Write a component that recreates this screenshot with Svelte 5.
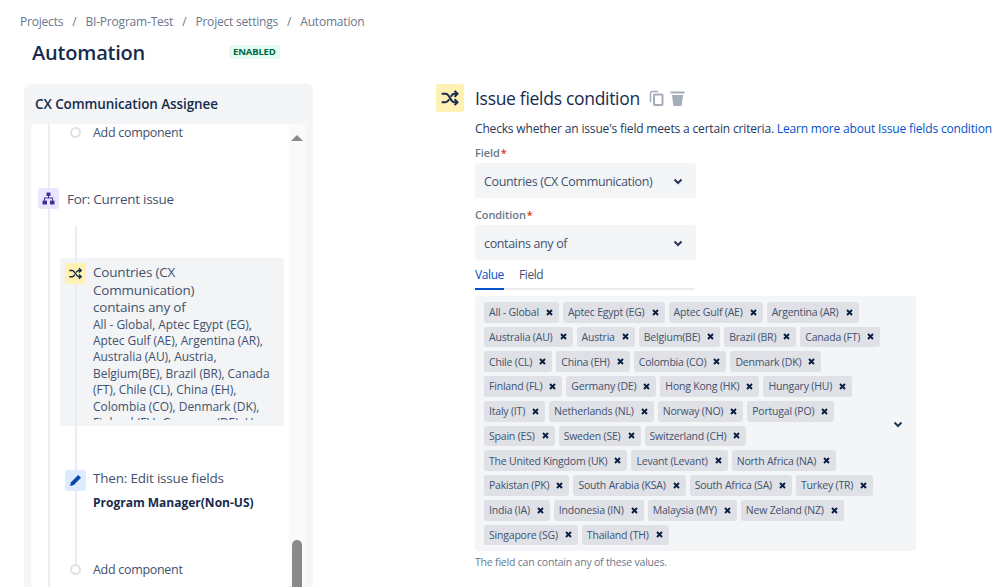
<script>
  const crumbs = ['Projects', 'BI-Program-Test', 'Project settings', 'Automation'];
  const countries = [
    'All - Global', 'Aptec Egypt (EG)', 'Aptec Gulf (AE)', 'Argentina (AR)',
    'Australia (AU)', 'Austria', 'Belgium(BE)', 'Brazil (BR)', 'Canada (FT)',
    'Chile (CL)', 'China (EH)', 'Colombia (CO)', 'Denmark (DK)',
    'Finland (FL)', 'Germany (DE)', 'Hong Kong (HK)', 'Hungary (HU)',
    'Italy (IT)', 'Netherlands (NL)', 'Norway (NO)', 'Portugal (PO)',
    'Spain (ES)', 'Sweden (SE)', 'Switzerland (CH)',
    'The United Kingdom (UK)', 'Levant (Levant)', 'North Africa (NA)',
    'Pakistan (PK)', 'South Arabia (KSA)', 'South Africa (SA)', 'Turkey (TR)',
    'India (IA)', 'Indonesia (IN)', 'Malaysia (MY)', 'New Zeland (NZ)',
    'Singapore (SG)', 'Thailand (TH)',
  ];
</script>

{#snippet shuffle(size)}
  <svg width={size} height={size} viewBox="0 0 24 24" fill="none" stroke="#172b4d" stroke-width="2.400">
    <path d="M2 7h5c4.500 0 5.500 10 10 10h3" />
    <path d="M2 17h5c1.800 0 3-1.600 4-3.400M13 10.400c1-1.800 2.200-3.400 4-3.400h3" />
    <path d="M17.500 3.500l3.500 3.500-3.500 3.500M17.500 13.500l3.500 3.500-3.500 3.500" />
  </svg>
{/snippet}

{#snippet chevron()}
  <svg width="10" height="7" viewBox="0 0 10 7" fill="none" stroke="#253858" stroke-width="2">
    <path d="M1.500 1.500L5 5l3.500-3.500" />
  </svg>
{/snippet}

<div class="page">
  <nav class="crumbs">
    {#each crumbs as crumb, i}
      {#if i > 0}<span class="sep">/</span>{/if}
      <span>{crumb}</span>
    {/each}
  </nav>

  <div class="columns">
    <aside class="left">
      <div class="title-row">
        <h1>Automation</h1>
        <span class="lozenge">ENABLED</span>
      </div>

      <section class="rule">
        <h2>CX Communication Assignee</h2>
        <div class="scroller">
          <div class="flow">
            <div class="line outer"></div>
            <div class="line inner"></div>

            <div class="add first"><span class="dot"></span>Add component</div>

            <div class="branch">
              <span class="icon purple">
                <svg width="13" height="13" viewBox="0 0 13 13" fill="#403294">
                  <rect x="4.500" y="0.500" width="4" height="3.500" rx="0.500" />
                  <rect x="0.500" y="8.500" width="4.500" height="4" rx="0.500" />
                  <rect x="8" y="8.500" width="4.500" height="4" rx="0.500" />
                  <path d="M6 4h1v1.500h4v3h-1v-2h-7v2h-1v-3h4z" />
                </svg>
              </span>
              <span>For: Current issue</span>
            </div>

            <div class="card">
              <span class="icon yellow">{@render shuffle(15)}</span>
              <div class="card-text">
                <div class="big">Countries (CX Communication)<br />contains any of</div>
                <div class="small">All - Global, Aptec Egypt (EG), Aptec Gulf (AE), Argentina (AR), Australia (AU), Austria, Belgium(BE), Brazil (BR), Canada (FT), Chile (CL), China (EH), Colombia (CO), Denmark (DK), Finland (FL), Germany (DE), Hong Kong (HK), Hungary (HU)</div>
              </div>
            </div>

            <div class="action">
              <span class="icon blue">
                <svg width="13" height="13" viewBox="0 0 13 13" fill="#0747a6">
                  <path d="M9.200 1l2.800 2.800-7.200 7.200-3.800 1 1-3.800z" />
                </svg>
              </span>
              <div>
                <div class="big">Then: Edit issue fields</div>
                <div class="strong">Program Manager(Non-US)</div>
              </div>
            </div>

            <div class="add last"><span class="dot"></span>Add component</div>
          </div>

          <div class="scrollbar">
            <span class="arrow"></span>
            <span class="thumb"></span>
          </div>
        </div>
      </section>
    </aside>

    <main class="right">
      <header class="head">
        <span class="head-icon">{@render shuffle(20)}</span>
        <h3>Issue fields condition</h3>
        <svg class="tool" width="15" height="16" viewBox="0 0 15 16" fill="none" stroke="#a5adba">
          <path d="M1.500 12V3a1.500 1.500 0 0 1 1.500-1.500h6" stroke-width="1.500" />
          <rect x="5" y="4.500" width="8.500" height="10.500" rx="1" stroke-width="2" />
        </svg>
        <svg class="tool trash" width="15" height="16" viewBox="0 0 15 16" fill="#a5adba">
          <path d="M0.500 1.500h14v2h-14zM2 5h11l-1.200 9.800a1.400 1.400 0 0 1-1.400 1.200h-5.800a1.400 1.400 0 0 1-1.400-1.200z" />
        </svg>
      </header>

      <p class="desc">Checks whether an issue's field meets a certain criteria. <a href="#learn">Learn more about Issue fields condition</a></p>

      <label class="label first-label" for="field-select">Field<span class="req">*</span></label>
      <div class="select" id="field-select"><span>Countries (CX Communication)</span>{@render chevron()}</div>

      <label class="label" for="cond-select">Condition<span class="req">*</span></label>
      <div class="select" id="cond-select"><span>contains any of</span>{@render chevron()}</div>

      <div class="tabs">
        <span class="tab active">Value</span>
        <span class="tab">Field</span>
      </div>

      <div class="multi">
        <div class="tags">
          {#each countries as country}
            <span class="tag">
              <span>{country}</span>
              <svg width="7" height="7" viewBox="0 0 7 7" stroke="#091e42" stroke-width="1.900">
                <path d="M1 1l5 5M6 1l-5 5" />
              </svg>
            </span>
          {/each}
        </div>
        <span class="multi-chevron">{@render chevron()}</span>
      </div>

      <p class="help">The field can contain any of these values.</p>
    </main>
  </div>
</div>

<style>
  :global(body) {
    margin: 0;
    background: #fff;
  }

  .page {
    height: 587px;
    overflow: hidden;
    font-family: "Open Sans", "Noto Sans", sans-serif;
    color: #172b4d;
  }

  .crumbs {
    display: flex;
    gap: 8px;
    height: 42px;
    padding-left: 20px;
    align-items: center;
    font-size: 12px;
    letter-spacing: -0.200px;
    color: #6b778c;
    box-sizing: border-box;
  }

  .sep {
    padding: 0 1px;
  }

  .columns {
    display: flex;
  }

  .left {
    width: 289px;
    margin-left: 24px;
  }

  .title-row {
    display: flex;
    align-items: flex-start;
    height: 42px;
    padding-left: 8px;
  }

  h1 {
    margin: -1px 0 0;
    width: 197px;
    font-size: 20px;
    font-weight: 600;
    line-height: 24px;
    letter-spacing: -0.200px;
  }

  .lozenge {
    margin-top: 3px;
    padding: 0 4px;
    height: 14px;
    line-height: 14px;
    font-size: 9.500px;
    font-weight: 700;
    letter-spacing: -0.150px;
    color: #006644;
    background: #e3fcef;
    border-radius: 3px;
  }

  .rule {
    height: 510px;
    background: #f4f5f7;
    border-radius: 6px;
    padding: 0 7px;
  }

  h2 {
    margin: 0;
    padding: 11px 4px 0;
    height: 40px;
    box-sizing: border-box;
    font-size: 13.500px;
    font-weight: 600;
    line-height: 19px;
    letter-spacing: -0.100px;
  }

  .scroller {
    display: flex;
    height: 470px;
    background: #fff;
    border-radius: 4px 0 0 0;
    overflow: hidden;
  }

  .flow {
    position: relative;
    flex: 1;
    min-width: 0;
  }

  .line {
    position: absolute;
    width: 2px;
    background: #ebecf5;
  }

  .line.outer {
    left: 17px;
    top: 0;
    bottom: 0;
  }

  .line.inner {
    left: 44px;
    top: 101px;
    height: 340px;
  }

  .add {
    position: relative;
    display: flex;
    align-items: center;
    font-size: 12.500px;
    letter-spacing: -0.300px;
    color: #42526e;
    padding-left: 39px;
    height: 18px;
  }

  .add.first {
    margin-top: -1px;
  }

  .dot {
    width: 7px;
    height: 7px;
    margin-right: 12px;
    border: 2px solid #dfe1e6;
    border-radius: 50%;
    background: #fff;
  }

  .icon {
    position: relative;
    display: flex;
    flex: none;
    align-items: center;
    justify-content: center;
    width: 21px;
    height: 21px;
    border-radius: 3px;
  }

  .purple { background: #eae6ff; }
  .yellow { background: #fff0b3; }
  .blue { background: #deebff; }

  .branch {
    position: relative;
    display: flex;
    align-items: center;
    gap: 8px;
    margin: 47px 0 0 7px;
    font-size: 13.500px;
    letter-spacing: -0.280px;
    color: #42526e;
  }

  .card {
    position: relative;
    display: flex;
    gap: 7px;
    height: 168px;
    width: 224px;
    margin: 49px 0 0 29px;
    padding: 5px 0 0 5px;
    box-sizing: border-box;
    overflow: hidden;
    background: rgba(235, 236, 240, 0.6);
    border-radius: 4px;
    color: #42526e;
  }

  .card-text {
    width: 185px;
    height: 156px;
    margin-top: 1px;
    overflow: hidden;
  }

  .big {
    font-size: 13.500px;
    line-height: 17.500px;
    letter-spacing: -0.200px;
  }

  .small {
    font-size: 12px;
    line-height: 16.400px;
    letter-spacing: -0.050px;
  }

  .action {
    position: relative;
    display: flex;
    gap: 7px;
    margin: 44px 0 0 34px;
    color: #42526e;
  }

  .strong {
    margin-top: 7px;
    font-size: 12px;
    line-height: 16px;
    font-weight: 700;
    color: #172b4d;
  }

  .add.last {
    margin-top: 50px;
  }

  .scrollbar {
    position: relative;
    flex: none;
    width: 17px;
    background: #fafafa;
  }

  .arrow {
    position: absolute;
    left: 2px;
    top: 11px;
    border-left: 6px solid transparent;
    border-right: 6px solid transparent;
    border-bottom: 6px solid #8a8a8a;
  }

  .thumb {
    position: absolute;
    left: 3px;
    top: 416px;
    width: 10px;
    height: 60px;
    background: #8a8a8a;
    border-radius: 5px;
  }

  .right {
    margin-left: 123px;
    margin-top: 42px;
    width: 560px;
  }

  .head {
    display: flex;
    align-items: center;
  }

  .head-icon {
    display: flex;
    align-items: center;
    justify-content: center;
    width: 28px;
    height: 28px;
    margin-right: 11px;
    background: #fff0b3;
    border-radius: 3px;
  }

  h3 {
    margin: 0 9px 0 0;
    font-size: 17.500px;
    font-weight: 500;
    letter-spacing: -0.300px;
  }

  .trash {
    margin-left: 6px;
  }

  .desc,
  .label,
  .select,
  .tabs,
  .multi,
  .help {
    margin-left: 39px;
  }

  .desc {
    margin-top: 8px;
    margin-bottom: 0;
    font-size: 12px;
    line-height: 17px;
    letter-spacing: -0.170px;
    color: #253858;
    white-space: nowrap;
  }

  .desc a {
    color: #0052cc;
    text-decoration: none;
  }

  .label {
    display: block;
    height: 16px;
    margin-top: 9px;
    margin-bottom: 2px;
    font-size: 11px;
    line-height: 16px;
    font-weight: 600;
    letter-spacing: -0.100px;
    color: #6b778c;
  }

  .first-label {
    margin-top: 8px;
  }

  .req {
    color: #de350b;
    margin-left: 1px;
  }

  .select {
    display: flex;
    align-items: center;
    justify-content: space-between;
    box-sizing: border-box;
    width: 221px;
    height: 35px;
    padding: 1px 13px 0 9px;
    background: #f4f5f7;
    border-radius: 3px;
    font-size: 12.500px;
    letter-spacing: -0.350px;
    color: #42526e;
  }

  .tabs {
    display: flex;
    gap: 15px;
    width: 220px;
    height: 30px;
    box-sizing: border-box;
    padding-top: 7px;
    border-bottom: 2px solid #ebecf0;
    font-size: 12px;
    letter-spacing: -0.400px;
    font-weight: 500;
    line-height: 16px;
    color: #42526e;
  }

  .tab {
    height: 21px;
  }

  .tab.active {
    color: #0052cc;
    border-bottom: 2px solid #0052cc;
  }

  .multi {
    display: flex;
    align-items: center;
    box-sizing: border-box;
    width: 441px;
    height: 255px;
    margin-top: 6px;
    padding: 6px 13px 6px 9px;
    background: #f4f5f7;
    border-radius: 4px;
  }

  .tags {
    display: flex;
    flex: 1;
    flex-wrap: wrap;
    gap: 4px;
  }

  .multi-chevron {
    flex: none;
    margin: -4px 0 0 8px;
  }

  .tag {
    display: flex;
    align-items: center;
    gap: 7px;
    height: 20.750px;
    padding: 0 6px 0 5px;
    background: #dfe1e6;
    border-radius: 3px;
    font-size: 10.500px;
    letter-spacing: -0.200px;
    color: #42526e;
  }

  .help {
    margin-top: 4px;
    margin-bottom: 0;
    font-size: 10.500px;
    letter-spacing: -0.200px;
    color: #6b778c;
  }
</style>
